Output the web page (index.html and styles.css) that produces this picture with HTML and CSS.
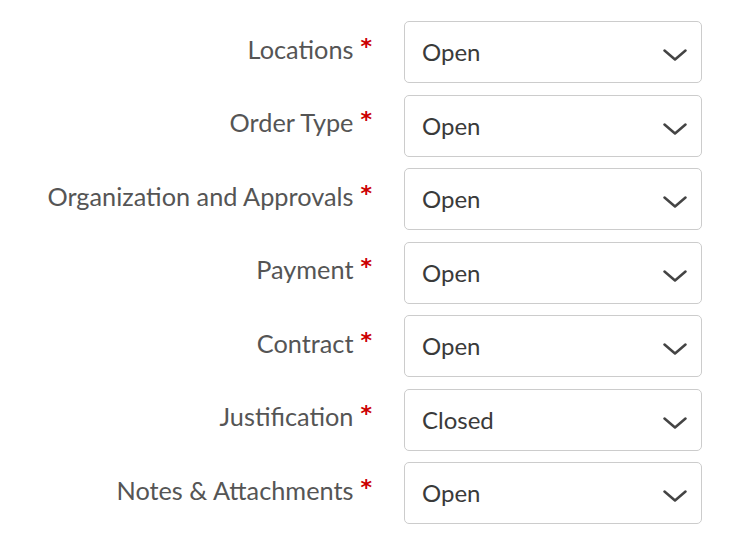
FILE: index.html
```html
<!DOCTYPE html>
<html>
<head>
<meta charset="utf-8">
<link rel="stylesheet" href="styles.css">
</head>
<body>
<form class="form">
  <div class="row"><label class="label">Locations<span class="req">*</span></label><div class="select"><span class="value">Open</span><svg class="chev" viewBox="0 0 24 12"><path d="M1.5 1.5 L12 10.5 L22.5 1.5"/></svg></div></div>
  <div class="row"><label class="label">Order Type<span class="req">*</span></label><div class="select"><span class="value">Open</span><svg class="chev" viewBox="0 0 24 12"><path d="M1.5 1.5 L12 10.5 L22.5 1.5"/></svg></div></div>
  <div class="row"><label class="label">Organization and Approvals<span class="req">*</span></label><div class="select"><span class="value">Open</span><svg class="chev" viewBox="0 0 24 12"><path d="M1.5 1.5 L12 10.5 L22.5 1.5"/></svg></div></div>
  <div class="row"><label class="label">Payment<span class="req">*</span></label><div class="select"><span class="value">Open</span><svg class="chev" viewBox="0 0 24 12"><path d="M1.5 1.5 L12 10.5 L22.5 1.5"/></svg></div></div>
  <div class="row"><label class="label">Contract<span class="req">*</span></label><div class="select"><span class="value">Open</span><svg class="chev" viewBox="0 0 24 12"><path d="M1.5 1.5 L12 10.5 L22.5 1.5"/></svg></div></div>
  <div class="row"><label class="label">Justification<span class="req">*</span></label><div class="select"><span class="value">Closed</span><svg class="chev" viewBox="0 0 24 12"><path d="M1.5 1.5 L12 10.5 L22.5 1.5"/></svg></div></div>
  <div class="row"><label class="label">Notes &amp; Attachments<span class="req">*</span></label><div class="select"><span class="value">Open</span><svg class="chev" viewBox="0 0 24 12"><path d="M1.5 1.5 L12 10.5 L22.5 1.5"/></svg></div></div>
</form>
</body>
</html>
```
FILE: styles.css
```css
html, body {
  margin: 0;
  padding: 0;
  background: #fff;
}
body {
  font-family: Lato, "Noto Sans", sans-serif;
}
.form {
  display: flex;
  flex-direction: column;
  gap: 11.5px;
  padding-top: 21px;
}
.row {
  display: grid;
  grid-template-columns: 372px 298px;
  column-gap: 32px;
  align-items: center;
  height: 62px;
}
.label {
  justify-self: end;
  font-size: 25.3px;
  line-height: 30px;
  color: #555;
  display: flex;
  align-items: flex-start;
  margin-top: -7px;
}
.req {
  color: #c00;
  font-family: "DejaVu Sans", sans-serif;
  font-weight: bold;
  font-size: 22px;
  margin-left: 7px;
  line-height: 1;
  margin-top: 2px;
}
.select {
  box-sizing: border-box;
  height: 62px;
  border: 1px solid #ccc;
  border-radius: 5px;
  display: flex;
  align-items: center;
  justify-content: space-between;
  padding: 0 14px 0 17px;
}
.value {
  font-size: 24px;
  line-height: 30px;
  color: #3a3a3a;
  margin-top: 0;
}
.chev {
  width: 24px;
  height: 12px;
  margin-top: 6px;
  fill: none;
  stroke: #444;
  stroke-width: 2.5;
  stroke-linecap: round;
  stroke-linejoin: round;
}
```
